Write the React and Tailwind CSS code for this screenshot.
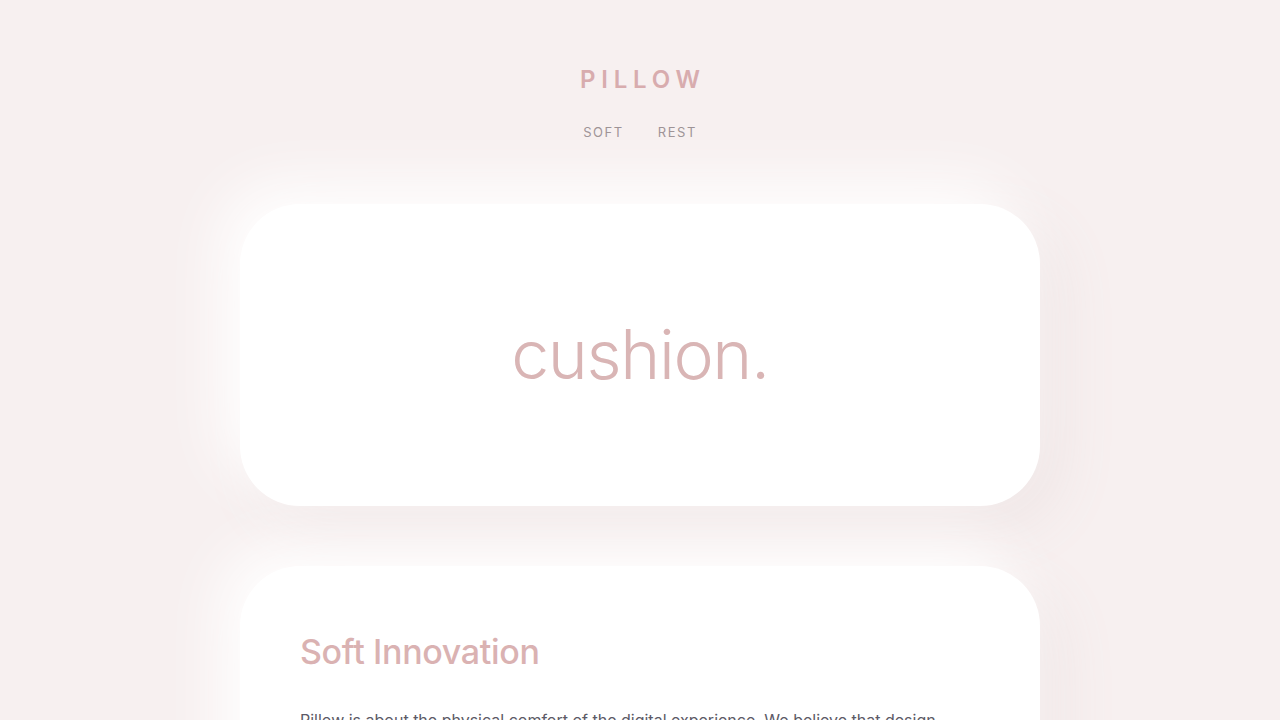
import React from 'react'

const font = { fontFamily: 'Inter, "Noto Sans", sans-serif' }

export default function App() {
  return (
    <div className="min-h-screen bg-[#f7f0f0] flex flex-col items-center pt-[60px] pb-24" style={font}>
      <header className="flex flex-col items-center">
        <h1 className="text-[24px] leading-[40px] font-semibold tracking-[0.24em] pl-[0.24em] text-[#d8acae]">
          PILLOW
        </h1>
        <nav className="mt-[22px] flex gap-[34px] text-[13px] leading-[20px] tracking-[0.12em] text-[#9c9194]">
          <a href="#">SOFT</a>
          <a href="#">REST</a>
        </nav>
      </header>

      <section className="mt-[62px] w-[800px] h-[302px] bg-white rounded-[60px] flex items-center justify-center shadow-[-20px_-20px_60px_#ffffff,20px_20px_60px_#efe5e5]">
        <p className="text-[68px] font-light leading-none text-[#d9b5b5] tracking-[-0.02em] -mt-[2px]">cushion.</p>
      </section>

      <section className="mt-[60px] w-[800px] bg-white rounded-[60px] px-[60px] pt-[64px] pb-[60px] shadow-[-20px_-20px_60px_#ffffff,20px_20px_60px_#efe5e5]">
        <h2 className="text-[34px] leading-[44px] font-medium text-[#dab2b2] tracking-[-0.01em]">Soft Innovation</h2>
        <p className="mt-[32px] text-[16px] leading-[28px] text-[#5c5a66]">
          Pillow is about the physical comfort of the digital experience. We believe that design
          should feel like sinking into something soft — gentle curves, quiet colours and a
          calm rhythm that invites you to stay a little longer.
        </p>
      </section>
    </div>
  )
}
